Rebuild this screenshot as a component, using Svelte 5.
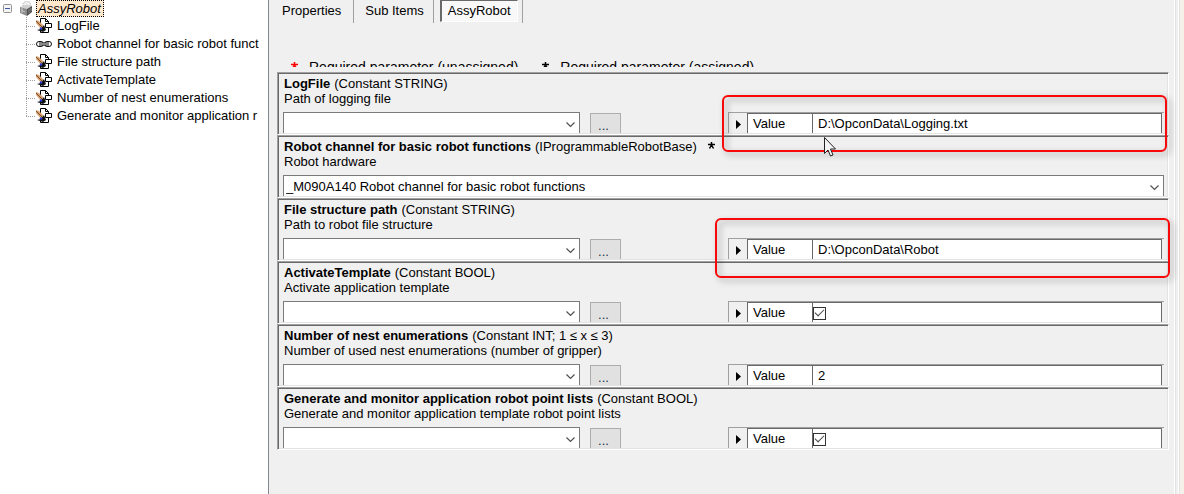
<script>
	let expanded = $state(true);
	let activeTab = $state('AssyRobot');

	const tabs = ['Properties', 'Sub Items', 'AssyRobot'];

	const treeItems = [
		{ label: 'LogFile', icon: 'file' },
		{ label: 'Robot channel for basic robot funct', icon: 'link' },
		{ label: 'File structure path', icon: 'file' },
		{ label: 'ActivateTemplate', icon: 'file' },
		{ label: 'Number of nest enumerations', icon: 'file' },
		{ label: 'Generate and monitor application r', icon: 'file' }
	];

	let params = $state([
		{ id: 'logfile', name: 'LogFile', type: '(Constant STRING)', desc: 'Path of logging file', value: 'D:\\OpconData\\Logging.txt', mark: 'first' },
		{ id: 'channel', name: 'Robot channel for basic robot functions', type: '(IProgrammableRobotBase)', desc: 'Robot hardware', link: '_M090A140 Robot channel for basic robot functions' },
		{ id: 'path', name: 'File structure path', type: '(Constant STRING)', desc: 'Path to robot file structure', value: 'D:\\OpconData\\Robot', mark: 'second' },
		{ id: 'template', name: 'ActivateTemplate', type: '(Constant BOOL)', desc: 'Activate application template', value: true },
		{ id: 'nests', name: 'Number of nest enumerations', type: '(Constant INT; 1 ≤ x ≤ 3)', desc: 'Number of used nest enumerations (number of gripper)', value: '2' },
		{ id: 'points', name: 'Generate and monitor application robot point lists', type: '(Constant BOOL)', desc: 'Generate and monitor application template robot point lists', value: true }
	]);
</script>

{#snippet star()}
	<svg class="star" viewBox="0 0 7 7" aria-hidden="true">
		<path d="M3.5 0v3.5M0 2.5h7M3.5 3L1.5 6.5M3.5 3l2 3.5" fill="none" stroke="currentColor" stroke-width="1.5" />
	</svg>
{/snippet}

{#snippet chevron()}
	<svg class="chevron" viewBox="0 0 9 6" aria-hidden="true">
		<path d="M.5 .5l4 4 4-4" fill="none" stroke="#505050" stroke-width="1.2" />
	</svg>
{/snippet}

<div class="window">
	<nav class="tree">
		<div class="root">
			<button class="toggle" aria-label="Toggle AssyRobot" onclick={() => (expanded = !expanded)}>
				<svg viewBox="0 0 9 9">
					<rect x=".5" y=".5" width="8" height="8" rx="1" fill="#f4f4f4" stroke="#919191" />
					<path d="M2 4.5h5" stroke="#3b56a5" />
					{#if !expanded}<path d="M4.5 2v5" stroke="#3b56a5" />{/if}
				</svg>
			</button>
			<svg class="cube" viewBox="0 0 14 16" aria-hidden="true">
				<path d="M4 5V2l3-2 4 1 1 4z" fill="#ececec" stroke="#b4b4b4" stroke-dasharray="1 1" />
				<path d="M1 6l6-2 6 1-5 3z" fill="#d0d0d0" />
				<path d="M1 6l7 2v7l-7-3z" fill="#8b8b8b" />
				<path d="M8 8l5-3v6l-5 4z" fill="#505050" />
				<path d="M2 9l4 2M3 7v5" stroke="#c8c8c8" />
				<path d="M10 8v4M12 7v3" stroke="#888" />
			</svg>
			<a class="selected" href="#logfile">AssyRobot</a>
		</div>
		{#if expanded}
			<ul>
				{#each treeItems as item, i}
					<li>
						{#if item.icon === 'link'}
							<svg class="icon" viewBox="0 0 16 16" aria-hidden="true">
								<rect x=".5" y="5.5" width="7" height="5" rx="2.5" fill="#fff" stroke="#111" />
								<rect x="8.5" y="5.5" width="7" height="5" rx="2.5" fill="#fff" stroke="#111" />
								<path d="M3 8h10" stroke="#111" stroke-width="3" />
								<path d="M3 8h10" stroke="#fff" />
							</svg>
						{:else}
							<svg class="icon" viewBox="0 0 16 16" aria-hidden="true">
								<path d="M4.500 14.500V.5h5l3 3v11z" fill="#fff" stroke="#000" />
								<path d="M9.500 .5v3h3" fill="none" stroke="#000" />
								<path d="M9.500 5.500h6v4h-6z" fill="#fff" stroke="#000" />
								<path d="M0 2l3 1 4 4 1 3-3 1-5-6z" fill="#d9a273" />
								<path d="M0 3l7 7" stroke="#7a5230" />
								<path d="M0 6l4 5v2H1L0 11z" fill="#fff" />
								<path d="M8 7l2 5-3 2-6-2 4-1z" fill="#111" />
								<path d="M4 10l2 1" stroke="#2338d8" stroke-width="2" />
							</svg>
						{/if}
						<a href="#{params[i].id}">{item.label}</a>
					</li>
				{/each}
			</ul>
		{/if}
	</nav>

	<main>
		<div class="tabs" role="tablist">
			{#each tabs as tab}
				<div class="tab-slot">
					<button role="tab" class="tab" class:active={tab === activeTab} aria-selected={tab === activeTab} onclick={() => (activeTab = tab)}>{tab}</button>
				</div>
			{/each}
		</div>

		<div class="legend">
			<span class="required">{@render star()}</span>
			<span class="legend-text">Required parameter (unassigned)</span>
			<span>{@render star()}</span>
			<span class="legend-text">Required parameter (assigned)</span>
		</div>

		<div class="params">
			{#each params as param}
				<section class="param" id={param.id}>
					<div class="title">
						<h2>{param.name}</h2>
						<span>{param.type}</span>
						{#if param.link}<span class="assigned">{@render star()}</span>{/if}
					</div>
					<p>{param.desc}</p>
					<div class="controls">
						{#if param.link}
							<div class="combo wide">
								<select aria-label={param.name}><option>{param.link}</option></select>
								{@render chevron()}
							</div>
						{:else}
							<div class="combo">
								<select aria-label={param.name}><option></option></select>
								{@render chevron()}
							</div>
							<button class="browse" aria-label="Browse {param.name}">...</button>
							<div class="grid">
								<span class="marker">
									<svg viewBox="0 0 5 9" aria-hidden="true"><path d="M0 0l5 4.5L0 9z" /></svg>
								</span>
								<label for="{param.id}-value">Value</label>
								<div class="cell">
									{#if typeof param.value === 'boolean'}
										<input id="{param.id}-value" type="checkbox" bind:checked={param.value} />
									{:else}
										<input id="{param.id}-value" type="text" bind:value={param.value} />
									{/if}
								</div>
							</div>
						{/if}
					</div>
					{#if param.mark}
						<div class="highlight {param.mark}"></div>
					{/if}
					{#if param.mark === 'first'}
						<svg class="pointer" viewBox="0 0 13 20" aria-hidden="true">
							<path d="M.5 .5v16l3.500-3.500 2.500 6 2.500-1-2.500-6h5z" fill="#f4f4f4" stroke="#222" />
						</svg>
					{/if}
				</section>
			{/each}
		</div>
	</main>
	<div class="edge"></div>
</div>

<style>
	:global(body) {
		overflow: hidden;
	}

	.window {
		display: flex;
		min-height: 100vh;
		background: #f0f0f0;
		color: #000;
		font: 13px/16px "Liberation Sans", Arial, sans-serif;
	}

	a {
		color: inherit;
		text-decoration: none;
	}

	/* navigation tree */
	.tree {
		flex: 0 0 268px;
		overflow: hidden;
		background: #fff;
		border-right: 1px solid #828790;
		white-space: nowrap;
	}

	.root {
		display: flex;
		align-items: center;
		height: 17px;
		padding-left: 3px;
	}

	.toggle {
		width: 9px;
		height: 9px;
		padding: 0;
		border: 0;
		background: none;
	}

	.toggle svg {
		display: block;
	}

	.cube {
		width: 14px;
		height: 16px;
		margin: 0 3px 0 7px;
	}

	.selected {
		padding: 0 2px 0 1px;
		border: 1px dotted #000;
		background: #ffe8cc;
		font-style: italic;
		line-height: 15px;
	}

	ul {
		margin: 0 0 0 26px;
		padding: 0;
		list-style: none;
	}

	li {
		display: flex;
		align-items: center;
		height: 18px;
		background:
			repeating-linear-gradient(to bottom, #a0a0a0 0 1px, transparent 1px 2px) 0 0 / 1px 100% no-repeat,
			repeating-linear-gradient(to right, #a0a0a0 0 1px, transparent 1px 2px) 0 9px / 9px 1px no-repeat;
	}

	li:last-child {
		background-size: 1px 9px, 9px 1px;
	}

	.icon {
		width: 16px;
		height: 16px;
		margin: 0 5px 0 10px;
	}

	/* tabs */
	main {
		flex: 1;
		min-width: 0;
		padding: 0 1px 0 8px;
	}

	.tabs {
		display: flex;
		height: 23px;
	}

	.tab-slot {
		padding: 0 4px 0 6px;
		border-right: 1px solid #a0a0a0;
	}

	.tab-slot:first-child {
		padding: 0 7px 0 0;
	}

	.tab {
		height: 22px;
		padding: 0 5px;
		border: 0;
		background: none;
		font: inherit;
	}

	.tab.active {
		padding: 0 6px;
		border: solid;
		border-width: 1px 1px 1px 2px;
		border-color: #696969 #fff #fff #696969;
		background: #f8f8f8;
	}

	/* only the upper half of the legend shows above the scrolled list */
	.legend {
		display: flex;
		height: 8px;
		margin: 36px 0 5px 14px;
		overflow: hidden;
		font-size: 14px;
	}

	.legend-text {
		margin: 0 24px 0 11px;
	}

	.required {
		color: #f00;
	}

	.star {
		display: block;
		width: 7px;
		height: 7px;
		margin-top: 3px;
	}

	/* parameter list */
	.param {
		position: relative;
		height: 63px;
		box-sizing: border-box;
		padding: 3px 4px 0 5px;
		border: 1px solid;
		border-color: #a0a0a0 #fff #fff #a0a0a0;
		box-shadow: inset 1px 1px #696969, inset -1px -1px #e3e3e3;
	}

	.title {
		display: flex;
		gap: 4px;
		height: 15px;
		padding-left: 1px;
		white-space: nowrap;
	}

	h2 {
		margin: 0;
		font: inherit;
		font-weight: bold;
	}

	.assigned {
		padding-left: 7px;
	}

	p {
		height: 15px;
		margin: 0;
		padding-left: 1px;
	}

	.controls {
		display: flex;
		height: 21px;
		margin-top: 6px;
		overflow: hidden;
	}

	.combo {
		position: relative;
		flex: 0 1 297px;
	}

	.combo.wide {
		flex: 1;
	}

	select {
		display: block;
		width: 100%;
		height: 24px;
		padding: 0 2px;
		border: 1px solid #7a7a7a;
		border-radius: 0;
		background: #fff;
		color: #000;
		font: inherit;
		appearance: none;
	}

	.chevron {
		position: absolute;
		top: 10px;
		right: 5px;
		width: 9px;
		height: 6px;
		pointer-events: none;
	}

	.browse {
		width: 31px;
		height: 26px;
		margin: 1px 0 0 10px;
		padding: 0 4px 0 0;
		border: 1px solid #adadad;
		background: #e1e1e1;
		color: #234;
		font: inherit;
	}

	.grid {
		display: flex;
		flex: 1;
		height: 24px;
		margin-left: 107px;
		border-top: 1px solid #a0a0a0;
		border-left: 1px solid #a0a0a0;
	}

	.marker {
		width: 18px;
		padding-top: 7px;
		box-sizing: border-box;
	}

	.marker svg {
		display: block;
		width: 5px;
		height: 9px;
		margin-left: 7px;
	}

	.grid label {
		width: 65px;
		padding: 2px 0 0 5px;
		box-sizing: border-box;
		border: solid #696969;
		border-width: 1px 0 0 1px;
		background: #fff;
	}

	.cell {
		flex: 1;
		min-width: 0;
		margin-right: 2px;
		border: solid #696969;
		border-width: 1px 1px 0;
		background: #fff;
	}

	input[type="text"] {
		display: block;
		width: 100%;
		box-sizing: border-box;
		padding: 2px 5px;
		border: 0;
		outline: 0;
		background: none;
		color: #000;
		font: inherit;
	}

	input[type="checkbox"] {
		display: block;
		width: 13px;
		height: 13px;
		margin: 4px 0 0;
		border: 1px solid #333;
		background: #fff;
		appearance: none;
	}

	input[type="checkbox"]:checked::before {
		content: "";
		display: block;
		width: 8px;
		height: 4px;
		margin: 1px 0 0 1px;
		border: solid #444;
		border-width: 0 0 1px 1px;
		transform: rotate(-45deg);
	}

	/* callouts drawn over the panel */
	.highlight {
		position: absolute;
		z-index: 1;
		border: 2px solid #f80808;
		border-radius: 6px;
		filter: drop-shadow(3px 3px 3px rgba(0, 0, 0, 0.35));
		pointer-events: none;
	}

	.highlight.first {
		top: 22px;
		right: 1px;
		width: 441px;
		height: 53px;
	}

	.highlight.second {
		top: 19px;
		right: -2px;
		width: 451px;
		height: 56px;
	}

	.pointer {
		position: absolute;
		z-index: 2;
		top: 64px;
		right: 331px;
		width: 13px;
		height: 20px;
	}

	.edge {
		flex: 0 0 14px;
		box-sizing: border-box;
		background: linear-gradient(to right, #f0f0f0 0 4px, #fff 4px 5px, #e3e3e3 5px 6px, #f0f0f0 6px 8px, #fff 8px 9px, #e3e3e3 9px 10px, #f5f1e8 10px);
	}
</style>
